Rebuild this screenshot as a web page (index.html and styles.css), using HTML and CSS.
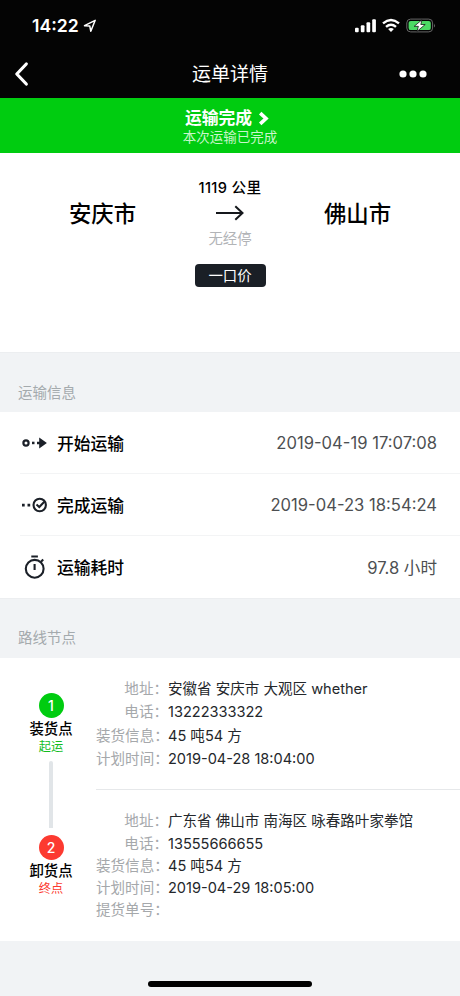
FILE: index.html
```html
<!DOCTYPE html>
<html lang="zh-CN">
<head>
<meta charset="utf-8">
<meta name="viewport" content="width=device-width">
<title>运单详情</title>
<link rel="stylesheet" href="styles.css">
</head>
<body>
<div class="status">
  <span class="clock">14:22</span>
  <svg class="locate" width="14" height="14" viewBox="0 0 14 14"><path d="M1.5 6.7 12.2 1.3 7.8 12.3 6.8 7.1Z" fill="none" stroke="#fff" stroke-width="1.5" stroke-linejoin="round"/></svg>
  <svg class="indicators" width="82" height="16" viewBox="0 0 82 16">
    <g fill="#fff"><rect x="0" y="9.7" width="3.7" height="4.5" rx="1"/><rect x="5.8" y="7.3" width="3.7" height="6.9" rx="1"/><rect x="11.5" y="4.2" width="3.7" height="10" rx="1"/><rect x="17.2" y="1.2" width="3.7" height="13" rx="1"/></g>
    <g fill="none" stroke="#fff" stroke-width="2.4"><path d="M28 5.4Q36 -1.4 44 5.4"/><path d="M31 8.8Q36 4.5 41 8.8"/></g>
    <path d="M33.1 11Q36 8.8 38.9 11L36 14.1Z" fill="#fff"/>
    <rect x="51.8" y="1.1" width="25.8" height="12.8" rx="3.8" fill="none" stroke="#686868"/>
    <rect x="53.6" y="2.9" width="22.2" height="9.2" rx="2.2" fill="#4cd964"/>
    <path d="M79 5.5Q80.8 7.5 79 9.5Z" fill="#686868"/>
    <path d="M67 1.8 59.2 8.3H63.4L62 13.4 70.2 6.5H65.8Z" fill="#fff" stroke="#000" stroke-width=".7"/>
  </svg>
</div>
<header class="nav">
  <svg width="16" height="26" viewBox="0 0 16 26"><path d="M13.3 3 3.8 13 13.3 23" fill="none" stroke="#fff" stroke-width="3.2" stroke-linecap="round" stroke-linejoin="round"/></svg>
  <h1>运单详情</h1>
  <svg width="28" height="8" viewBox="0 0 28 8" fill="#fff"><circle cx="4" cy="4" r="3.6"/><circle cx="14" cy="4" r="3.6"/><circle cx="24" cy="4" r="3.6"/></svg>
</header>
<section class="banner">
  <div class="banner-title">运输完成<svg width="11" height="15" viewBox="0 0 11 15"><path d="M2.2 2.2 8 7.5 2.2 12.8" fill="none" stroke="#fff" stroke-width="3.6"/></svg></div>
  <div class="banner-sub">本次运输已完成</div>
</section>
<section class="trip">
  <div class="city">安庆市</div>
  <div class="trip-mid">
    <div class="distance">1119 公里</div>
    <svg width="28" height="16" viewBox="0 0 28 16"><path d="M0 8H26.5M19.3 1.2 26.5 8 19.3 14.8" fill="none" stroke="#15181c" stroke-width="2"/></svg>
    <div class="via">无经停</div>
    <div class="price">一口价</div>
  </div>
  <div class="city">佛山市</div>
</section>
<h2 class="heading">运输信息</h2>
<section class="info">
  <div class="row">
    <svg width="29" height="26" viewBox="0 0 29 26"><circle cx="6" cy="13" r="2.6" fill="none" stroke="#1b2028" stroke-width="2.2"/><rect x="12" y="11.7" width="2.5" height="2.5" fill="#1b2028"/><path d="M17 11.8H19.2V7.5L26.9 13 19.2 18.5V14.3H17Z" fill="#1b2028"/></svg>
    <span class="label">开始运输</span><span class="value">2019-04-19 17:07:08</span>
  </div>
  <div class="row">
    <svg width="29" height="26" viewBox="0 0 29 26"><path d="M2 11.7h2.7v2.7H2zM7.5 11.7h2.7v2.7H7.5z" fill="#1b2028"/><circle cx="19.7" cy="13" r="6.2" fill="none" stroke="#1b2028" stroke-width="2.1"/><path d="M16.5 12.5 19.3 15 24.3 9.7" fill="none" stroke="#1b2028" stroke-width="2"/></svg>
    <span class="label">完成运输</span><span class="value">2019-04-23 18:54:24</span>
  </div>
  <div class="row">
    <svg width="29" height="26" viewBox="0 0 29 26" fill="none" stroke="#1b2028" stroke-width="2.1"><circle cx="14.7" cy="14.8" r="8.9"/><path d="M11.3 2.5h6.6M14.6 10v6M21 7.8l2.2-2.2"/></svg>
    <span class="label">运输耗时</span><span class="value">97.8 小时</span>
  </div>
</section>
<h2 class="heading second">路线节点</h2>
<section class="route">
  <div class="nodes">
    <div class="node"><b class="num">1</b><span class="name">装货点</span><span class="tag">起运</span></div>
    <i class="line"></i>
    <div class="node end"><b class="num">2</b><span class="name">卸货点</span><span class="tag">终点</span></div>
  </div>
  <div class="stops">
    <dl class="stop">
      <dt>地址：</dt><dd>安徽省 安庆市 大观区 whether</dd>
      <dt>电话：</dt><dd>13222333322</dd>
      <dt>装货信息：</dt><dd>45 吨54 方</dd>
      <dt>计划时间：</dt><dd>2019-04-28 18:04:00</dd>
    </dl>
    <dl class="stop last">
      <dt>地址：</dt><dd>广东省 佛山市 南海区 咏春路叶家拳馆</dd>
      <dt>电话：</dt><dd>13555666655</dd>
      <dt>装货信息：</dt><dd>45 吨54 方</dd>
      <dt>计划时间：</dt><dd>2019-04-29 18:05:00</dd>
      <dt>提货单号：</dt><dd></dd>
    </dl>
  </div>
</section>
<footer class="home"><i></i></footer>
</body>
</html>
```
FILE: styles.css
```css
* { box-sizing: border-box; margin: 0; padding: 0; }
body {
  width: 460px; height: 996px; overflow: hidden;
  display: flex; flex-direction: column;
  background: #f1f3f5; color: #000;
  font-family: Inter, "Noto Sans CJK SC", sans-serif;
}
svg { flex: none; display: block; }
.status { height: 48px; background: #040404; color: #fff; display: flex; align-items: center; padding: 3px 23px 0 32px; }
.clock { font-size: 17.6px; line-height: 22px; font-weight: 600; }
.locate { margin-left: 4px; }
.indicators { margin-left: auto; }
.nav { height: 50px; background: #040404; color: #fff; display: flex; align-items: center; justify-content: space-between; padding: 1px 33px 0 13px; }
.nav h1 { font-size: 19px; line-height: 28px; font-weight: 400; margin: 3px 0 0 32px; }
.banner { height: 55px; background: #00cc10; color: #fff; text-align: center; padding-top: 9px; }
.banner-title { display: flex; justify-content: center; align-items: center; gap: 6px; font-size: 16.8px; line-height: 22px; font-weight: 700; margin-left: -6px; }
.banner-sub { font-size: 13.5px; line-height: 17px; color: #c9f6cc; }
.trip { height: 199px; background: #fff; display: grid; grid-template-columns: 205px 50px 205px; justify-items: center; }
.city { font-size: 22.4px; line-height: 30px; font-weight: 500; margin-top: 46px; }
.trip-mid { display: flex; flex-direction: column; align-items: center; white-space: nowrap; }
.distance { font-size: 14.6px; letter-spacing: .35px; line-height: 20px; font-weight: 500; margin: 25px 0 7px; }
.via { font-size: 14.4px; line-height: 20px; color: #b2b4b7; margin: 8px 0 15px; }
.price { width: 71px; height: 23px; line-height: 24px; border-radius: 4px; background: #1a1f26; color: #fff; font-size: 14.4px; font-weight: 400; text-align: center; }
.heading { height: 60px; padding: 29px 18px 0; font-size: 14.5px; line-height: 21px; font-weight: 400; color: #a4aaad; border-top: 1px solid #eceef0; }
.second { padding-top: 28px; }
.info { background: #fff; padding-left: 20px; }
.row { height: 62px; display: flex; align-items: center; padding-right: 23px; border-bottom: 1px solid #f3f4f5; }
.row:last-child { border: 0; }
.label { font-size: 16.8px; line-height: 24px; font-weight: 500; margin: 2px 0 0 8px; }
.value { margin: 1px 0 0 auto; font-size: 16.6px; line-height: 24px; color: #4d4f52; }
.route { height: 283px; background: #fff; display: flex; }
.nodes { width: 96px; padding: 35px 0 0 6px; display: flex; flex-direction: column; align-items: center; }
.node { height: 68px; display: flex; flex-direction: column; align-items: center; }
.num { width: 25px; height: 25px; border-radius: 50%; background: #00cc10; color: #fff; font-size: 14px; line-height: 25px; font-weight: 500; text-align: center; }
.name { font-size: 14.4px; line-height: 20px; font-weight: 500; margin-top: 1px; }
.tag { font-size: 12.2px; line-height: 16px; color: #12bd1e; }
.end .num { background: #fc3a30; }
.end .tag { color: #fc3a30; }
.line { width: 4px; height: 67px; margin: 0 0 7px; background: #e1e5e8; border-radius: 2px 2px 0 0; }
.stops { flex: 1; }
.stop { display: grid; grid-template-columns: 72px 1fr; grid-auto-rows: 23.3px; font-size: 14.55px; line-height: 23.3px; height: 132px; padding-top: 20px; border-bottom: 1px solid #e6e8ea; white-space: nowrap; }
.stop dt { color: #a5a8ab; text-align: right; }
.stop dd { color: #24272b; }
.last { grid-auto-rows: 22.2px; line-height: 22.2px; height: 151px; padding-top: 20.4px; border: 0; }
.home { flex: 1; display: flex; justify-content: center; padding-top: 40px; }
.home i { width: 164px; height: 6px; border-radius: 3px; background: #000; }
```
